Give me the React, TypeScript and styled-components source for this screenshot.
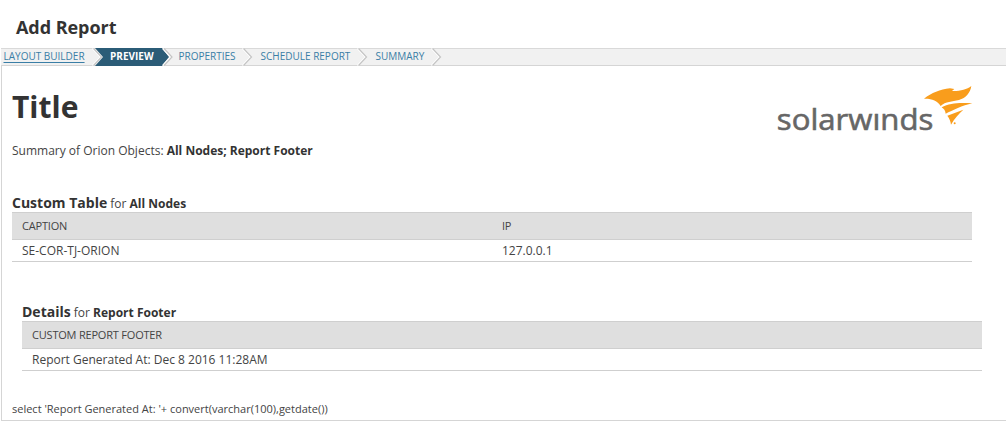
import styled, {createGlobalStyle} from 'styled-components'

const steps = [
    {label: 'LAYOUT BUILDER', width: 103, indent: 2.5},
    {label: 'PREVIEW', width: 69, indent: 6},
    {label: 'PROPERTIES', width: 81, indent: 5.5},
    {label: 'SCHEDULE REPORT', width: 115, indent: 6.5},
    {label: 'SUMMARY', width: 74, indent: 6.5},
]

export default function App() {
    return (
        <Page>
            <GlobalStyle/>
            <Heading>Add Report</Heading>
            <Wizard>
                {steps.map((step, i) => (
                    <Step key={step.label} $width={step.width} $indent={step.indent} $active={i === 1}>
                        <StepLabel $first={i === 0} $active={i === 1}>{step.label}</StepLabel>
                        <Chevron kind={i === 0 ? 'enter' : i === 1 ? 'leave' : 'plain'}/>
                    </Step>
                ))}
            </Wizard>
            <Report>
                <ReportHeader>
                    <Title>Title</Title>
                    <Logo/>
                </ReportHeader>
                <Summary>Summary of Orion Objects: <Strong>All Nodes; Report Footer</Strong></Summary>
                <Section>
                    <SectionTitle><Name>Custom Table</Name> for <Strong>All Nodes</Strong></SectionTitle>
                    <HeadRow>
                        <Cell>CAPTION</Cell>
                        <Cell>IP</Cell>
                    </HeadRow>
                    <Row>
                        <Cell>SE-COR-TJ-ORION</Cell>
                        <Cell>127.0.0.1</Cell>
                    </Row>
                </Section>
                <Section $nested>
                    <SectionTitle><Name>Details</Name> for <Strong>Report Footer</Strong></SectionTitle>
                    <HeadRow>
                        <Cell>CUSTOM REPORT FOOTER</Cell>
                    </HeadRow>
                    <Row>
                        <Cell>Report Generated At: Dec 8 2016 11:28AM</Cell>
                    </Row>
                </Section>
                <Footer>select 'Report Generated At: '+ convert(varchar(100),getdate())</Footer>
            </Report>
        </Page>
    )
}

function Chevron({kind}: {kind: 'enter' | 'leave' | 'plain'}) {
    return (
        <ChevronSvg width="12" height="18" viewBox="0 0 12 18">
            {kind === 'enter' && <path d="M3 0H12V18H3L11 9Z" fill="#2b5c77"/>}
            {kind === 'leave' && <path d="M0 0H1L8 9L1 18H0Z" fill="#2b5c77"/>}
            <path d={kind === 'leave' ? 'M1.7 0.5L9.5 9L1.7 17.5' : 'M0.5 0.5L8.5 9L0.5 17.5'} fill="none" stroke="#fff" strokeWidth="1.5"/>
            <path d={kind === 'leave' ? 'M3 0.5L11 9L3 17.5' : 'M1.5 0.5L9.5 9L1.5 17.5'} fill="none" stroke="#c4c4c4" strokeWidth="1.2"/>
        </ChevronSvg>
    )
}

function Logo() {
    return (
        <LogoSvg width="204" height="50" viewBox="0 0 204 50">
            <text x="6.8" y="55" textLength="156.5" lengthAdjust="spacingAndGlyphs" fontFamily="'Open Sans', sans-serif" fontSize="30" fontWeight="500" fill="#666" stroke="#666" strokeWidth=".6">solarwınds</text>
            <g transform="scale(.33333)" fill="#f99d1c">
                <path d="M462 71C485 54 510 43 540 40L553 42L546 48C568 49 590 44 604 33C601 53 588 69 567 75C546 80 527 79 512 93C502 76 484 70 462 71Z"/>
                <path d="M515 97C540 82 575 83 607 85C577 91 548 107 527 116C526 107 522 101 515 97Z"/>
                <path d="M532 122L580 104C566 116 554 130 543 149C542 139 538 129 532 122Z"/>
                <circle cx="554" cy="145" r="3"/>
            </g>
        </LogoSvg>
    )
}

const GlobalStyle = createGlobalStyle`
    body {
        margin: 0;
        background: #fff;
        color: #444;
        font-family: 'Open Sans', sans-serif;
        font-size: 12px;
    }

    * {
        box-sizing: border-box;
    }
`

const Page = styled.div`
    height: 438px;
    overflow: hidden;
    padding-left: 1px;
    white-space: nowrap;
`

const Heading = styled.h1`
    height: 48px;
    margin: 0;
    padding: 14px 0 0 15px;
    color: #333;
    font-size: 18px;
    font-weight: 700;
    letter-spacing: -.05px;
    line-height: 26px;
`

const Wizard = styled.div`
    display: flex;
    height: 18px;
    background: #f1f1f1;
    box-shadow: inset 0 1px #d9d9d9, inset 0 -1px #d5d5d5;
`

const Step = styled.div<{$width: number; $indent: number; $active: boolean}>`
    display: flex;
    width: ${p => p.$width}px;
    justify-content: space-between;
    padding-left: ${p => p.$indent}px;
    background: ${p => p.$active ? '#2b5c77' : 'transparent'};
`

const StepLabel = styled.span<{$first: boolean; $active: boolean}>`
    font-size: 10px;
    line-height: 17px;
    color: ${p => p.$active ? '#fff' : '#3a7ea6'};
    font-weight: ${p => p.$active ? 700 : 400};
    text-decoration: ${p => p.$first ? 'underline' : 'none'};
    text-underline-offset: 2px;
`

const ChevronSvg = styled.svg`
    flex: none;
    background: #f1f1f1;
    box-shadow: inset 0 1px #d9d9d9, inset 0 -1px #d5d5d5;
`

const Report = styled.div`
    height: 355px;
    border: solid #d5d5d5;
    border-width: 0 0 1px 1px;
    padding-left: 10px;
`

const ReportHeader = styled.div`
    display: flex;
    justify-content: space-between;
    height: 75px;
    padding: 9px 32px 0 0;
`

const Title = styled.h2`
    margin: 11px 0 0;
    color: #333;
    font-size: 30px;
    font-weight: 700;
    line-height: 42px;
`

const LogoSvg = styled.svg`
    flex: none;
    overflow: visible;
`

const Strong = styled.b`
    color: #333;
`

const Summary = styled.div`
    height: 51px;
    font-size: 12px;
    line-height: 20px;
`

const Section = styled.section<{$nested?: boolean}>`
    width: 960px;
    height: ${p => p.$nested ? 100 : 109}px;
    margin-left: ${p => p.$nested ? 10 : 0}px;
`

const SectionTitle = styled.div`
    height: 20px;
    line-height: 22px;
    font-size: 12px;
`

const Name = styled(Strong)`
    font-size: 14px;
`

const Row = styled.div`
    display: flex;
    height: 22px;
    border-bottom: 1px solid #cfcfcf;
    line-height: 21px;
`

const HeadRow = styled(Row)`
    height: 28px;
    border-top: 1px solid #cfcfcf;
    background: #dfdfdf;
    font-size: 11px;
    letter-spacing: -.2px;
    line-height: 25px;
`

const Cell = styled.div`
    width: 480px;
    padding-left: 10px;
`

const Footer = styled.div`
    font-size: 11px;
    line-height: 16px;
`
